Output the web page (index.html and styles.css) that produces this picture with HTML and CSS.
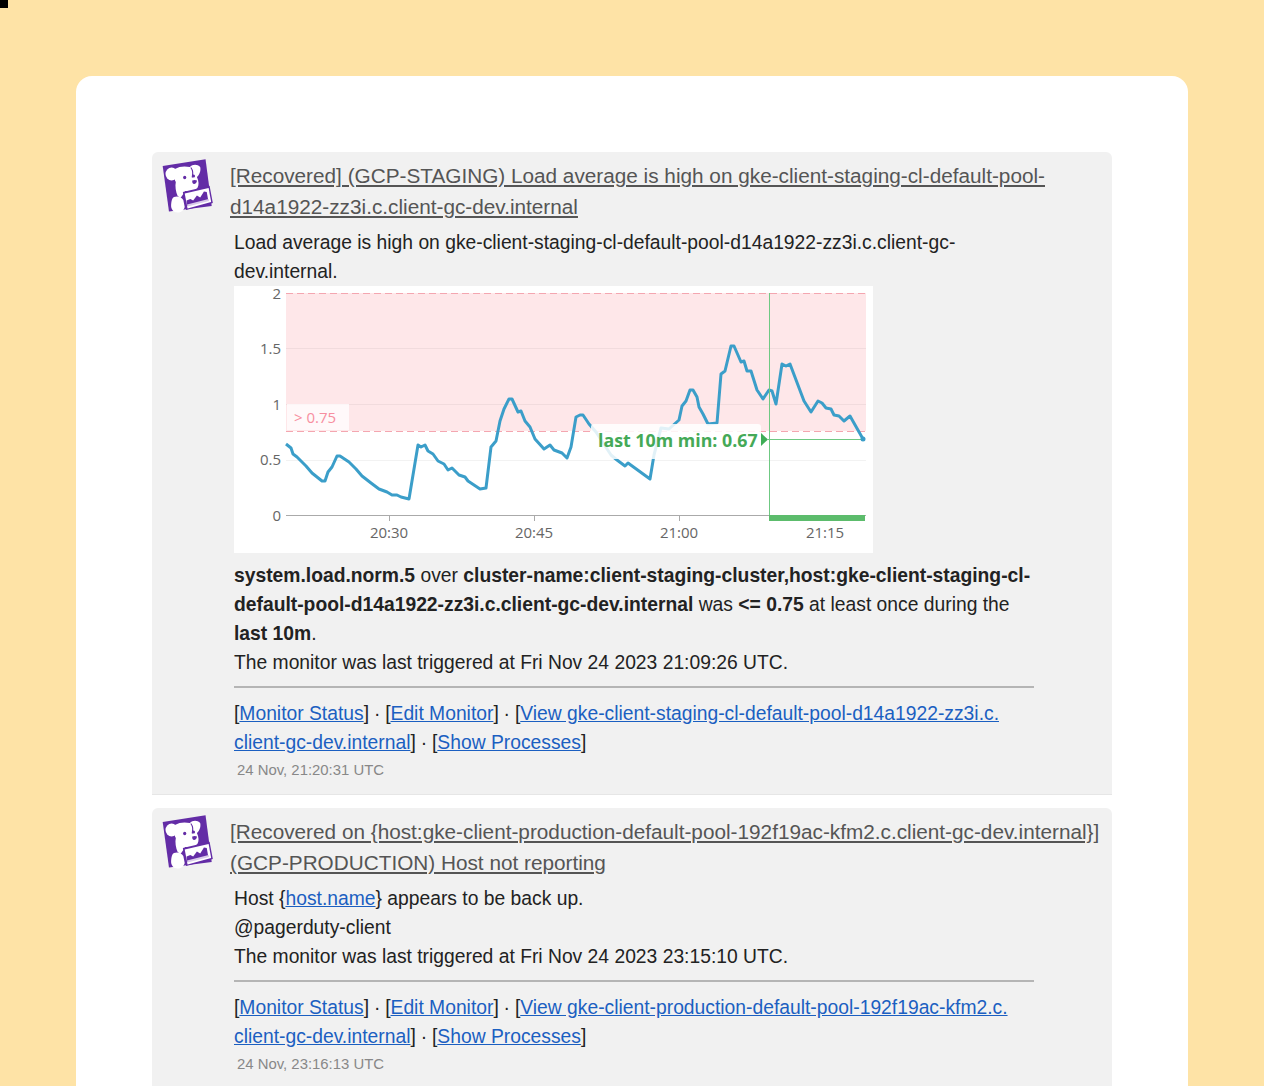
FILE: index.html
```html
<!DOCTYPE html>
<html>
<head>
	<title>Alerts</title>
	<meta charset="utf-8" />
	<link rel="stylesheet" href="styles.css">
</head>
<body>
	<div class="corner"></div>
	<svg class="defs" width="0" height="0">
		<symbol id="dog" viewBox="0 0 64 60" preserveAspectRatio="none">
			<polygon points="5,10 50.700,3.300 57.300,50 11.700,55.500" fill="#632ca6"/>
			<circle cx="14.500" cy="18" r="6.500" fill="#fff"/>
			<path fill="#fff" d="M18 13C23 10 29 10 34 11 37 8 42 8 45 11 46 15 44 19 41.500 21 43.500 25 44 29 42 32 39 35 34 36 29 35L27 38 24 42 21 40C19 36 18 30 19 26 17 23 17 17 18 13z"/>
			<path fill="none" stroke="#632ca6" stroke-width="1.200" d="M35 11.500C37 14 37.500 18 36.500 21.500"/>
			<circle cx="28.500" cy="21.500" r="1.700" fill="#632ca6"/>
			<circle cx="38" cy="20" r="1.500" fill="#632ca6"/>
			<path fill="#632ca6" d="M36.500 24.500c2-.8 4-.6 5 0 0 2-1.500 3.500-3 3.500s-2.200-1.500-2-3.500z"/>
			<path fill="#fff" d="M17 41c4-1.500 8 0 10 3l1.500 7c-1 3.500-4 5.500-7.500 5.500-4.500 0-7.500-3.500-7-8 .3-3.500 1-6.500 3-7.500z"/>
			<polygon fill="#632ca6" points="26.500,36 55,29.800 58.500,47 30,54"/>
			<polygon fill="#fff" points="28.500,37.500 54,32 56.700,46 31.500,52.500"/>
			<path fill="#632ca6" d="M30.500 44.500l4-1.500 3 1.500 4-5 3.500 2 4-6 3 .5 1.500 8-1 .5-22 5.500z"/>
			<path fill="#d9cbea" d="M31 48.500l23-5.500.5 2-23 5.500z"/>
		</symbol>
	</svg>

	<div class="card">
		<div class="msg">
			<svg class="avatar"><use href="#dog"/></svg>
			<div class="msg-main">
				<a class="title">[Recovered] (GCP-STAGING) Load average is high on gke-client-staging-cl-default-pool-d14a1922-zz3i.c.client-gc-dev.internal</a>
				<div class="msg-body">
					<p>Load average is high on gke-client-staging-cl-default-pool-d14a1922-zz3i.c.client-gc-dev.internal.</p>
					<svg class="graph" viewBox="0 2 639 267" width="639" height="267">
						<rect y="2" width="639" height="267" fill="#fff"/>
						<rect x="52" y="9" width="580" height="138" fill="#fee7e9"/>
						<g class="grid">
							<line x1="52" y1="64.500" x2="632" y2="64.500"/>
							<line x1="52" y1="120.500" x2="632" y2="120.500"/>
							<line x1="52" y1="176.500" x2="632" y2="176.500"/>
						</g>
						<line class="limit" x1="52" y1="9.500" x2="632" y2="9.500"/>
						<line class="limit" x1="52" y1="147.500" x2="632" y2="147.500"/>
						<rect x="53" y="120" width="62" height="26" fill="#fff" opacity=".75"/>
						<text class="warn" x="60" y="139">&gt; 0.75</text>
						<g class="axis">
							<text x="47" y="15" text-anchor="end">2</text>
							<text x="47" y="70" text-anchor="end">1.5</text>
							<text x="47" y="126" text-anchor="end">1</text>
							<text x="47" y="181" text-anchor="end">0.5</text>
							<text x="47" y="237" text-anchor="end">0</text>
							<text x="155" y="254" text-anchor="middle">20:30</text>
							<text x="300" y="254" text-anchor="middle">20:45</text>
							<text x="445" y="254" text-anchor="middle">21:00</text>
							<text x="591" y="254" text-anchor="middle">21:15</text>
						</g>
						<line class="base" x1="52" y1="231.500" x2="632" y2="231.500"/>
						<g class="base">
							<line x1="155.500" y1="231" x2="155.500" y2="237"/>
							<line x1="300.500" y1="231" x2="300.500" y2="237"/>
							<line x1="445.500" y1="231" x2="445.500" y2="237"/>
							<line x1="591.500" y1="231" x2="591.500" y2="237"/>
						</g>
						<polyline class="series" points="52,160 57,164 59,170 63,173 72,182 78,189 88,197 91,197 94,188 98,183 103,172 106,172 115,178 122,185 128,192 137,199 145,205 153,208 158,211 163,211 167,213 175,215 184,161 187,163 191,161 194,167 199,170 204,177 210,180 214,186 218,184 225,191 231,193 234,197 246,205 252,204 257,163 262,157 266,137 270,125 275,115 278,115 284,128 287,127 291,137 296,143 301,155 310,165 316,161 320,166 328,169 333,174 337,163 342,133 346,131 349,131 355,140 362,148 377,171 383,176 391,182 394,179 416,195 420,171 427,144 435,145 445,136 448,122 452,117 456,106 459,106 463,113 465,123 469,130 474,140 483,139 487,90 491,87 497,62 500,62 507,78 510,77 513,87 517,87 523,106 529,115 535,106 538,107 542,120 548,80 552,82 556,80 570,117 577,128 584,117 588,119 592,124 597,125 600,131 605,132 610,137 616,132 629,155"/>
						<rect x="357" y="140" width="170" height="35" rx="3" fill="#fff" opacity=".85"/>
						<text class="green-label" x="364" y="163">last 10m min: 0.67</text>
						<polygon points="527,149 534,155.500 527,162" fill="#3fad57"/>
						<line class="marker" x1="535.500" y1="9" x2="535.500" y2="231"/>
						<line class="marker" x1="534" y1="155.500" x2="629" y2="155.500"/>
						<circle cx="629" cy="155" r="2.500" fill="#3b9ec9"/>
						<rect x="535" y="231" width="96" height="6" fill="#5cbc6c"/>
					</svg>
					<p><b>system.load.norm.5</b> over <b>cluster-name:client-staging-cluster,host:gke-client-staging-cl-default-pool-d14a1922-zz3i.c.client-gc-dev.internal</b> was <b>&lt;= 0.75</b> at least once during the <b>last 10m</b>.</p>
					<p>The monitor was last triggered at Fri Nov 24 2023 21:09:26 UTC.</p>
					<hr>
					<p>[<a>Monitor Status</a>]<span class="sep"> · </span>[<a>Edit Monitor</a>]<span class="sep"> · </span>[<a>View gke-client-staging-cl-default-pool-d14a1922-zz3i.c.<br>client-gc-dev.internal</a>]<span class="sep"> · </span>[<a>Show Processes</a>]</p>
					<div class="time">24 Nov, 21:20:31 UTC</div>
				</div>
			</div>
		</div>

		<div class="msg">
			<svg class="avatar"><use href="#dog"/></svg>
			<div class="msg-main">
				<a class="title">[Recovered on {host:gke-client-production-default-pool-192f19ac-kfm2.c.client-gc-dev.internal}] (GCP-PRODUCTION) Host not reporting</a>
				<div class="msg-body">
					<p>Host {<a>host.name</a>} appears to be back up.</p>
					<p>@pagerduty-client</p>
					<p>The monitor was last triggered at Fri Nov 24 2023 23:15:10 UTC.</p>
					<hr>
					<p>[<a>Monitor Status</a>]<span class="sep"> · </span>[<a>Edit Monitor</a>]<span class="sep"> · </span>[<a>View gke-client-production-default-pool-192f19ac-kfm2.c.<br>client-gc-dev.internal</a>]<span class="sep"> · </span>[<a>Show Processes</a>]</p>
					<div class="time">24 Nov, 23:16:13 UTC</div>
				</div>
			</div>
		</div>
	</div>
</body>
</html>
```

FILE: styles.css
```css
*{
	padding: 0px;
	margin: 0px;
	box-sizing: border-box;
}
html,body{
	height: 1086px;
	overflow: hidden;
}
body{
	background: #fee3a6;
	padding: 76px 76px 0;
	font-family: "Liberation Sans", Arial, sans-serif;
}
.corner{
	position: absolute;
	left: 0;
	top: 0;
	width: 8px;
	height: 8px;
	background: #000;
}
.defs{
	position: absolute;
}
.card{
	background: #fff;
	border-radius: 16px;
	padding: 76px 76px 40px;
	height: 1100px;
}
.msg{
	display: flex;
	background: #f1f1f1;
	border-radius: 6px 6px 0 0;
	border-bottom: 1px solid #e6e6e6;
	padding: 4px 11px 11px 6px;
	margin-bottom: 13px;
}
.avatar{
	width: 60px;
	height: 60px;
	flex: none;
	margin-right: 12px;
}
.msg-main{
	flex: 1;
	min-width: 0;
	padding-top: 4px;
}
.title{
	display: block;
	font-size: 20.76px;
	line-height: 31px;
	color: #555;
	text-decoration: underline;
}
.msg-body{
	padding: 6px 0 0 4px;
	width: 804px;
	font-size: 19.3px;
	line-height: 29px;
	color: #222;
}
.msg-body a{
	color: #1b5fc1;
	text-decoration: underline;
}
.sep{
	margin: 0 -0.5px;
}
.graph{
	display: block;
	margin-bottom: 8px;
}
.grid line{
	stroke: #000;
	stroke-opacity: .05;
}
.limit{
	stroke: #f4a6b0;
	stroke-dasharray: 7 4;
}
.warn{
	font: 15px "Open Sans", sans-serif;
	fill: #f78fa0;
}
.axis text{
	font: 15px "Open Sans", sans-serif;
	fill: #666;
}
.base line,
line.base{
	stroke: #aaa;
}
.series{
	fill: none;
	stroke: #3b9ec9;
	stroke-width: 3;
	stroke-linejoin: round;
}
.green-label{
	font: bold 17.800px "Open Sans", sans-serif;
	fill: #45a957;
}
.marker{
	stroke: #6fc983;
}
hr{
	border: 0;
	border-top: 2px solid #b5b5b5;
	margin: 9px 0 11px;
}
.time{
	font-size: 14.900px;
	line-height: 26px;
	color: #888;
	padding-left: 3px;
}
```
